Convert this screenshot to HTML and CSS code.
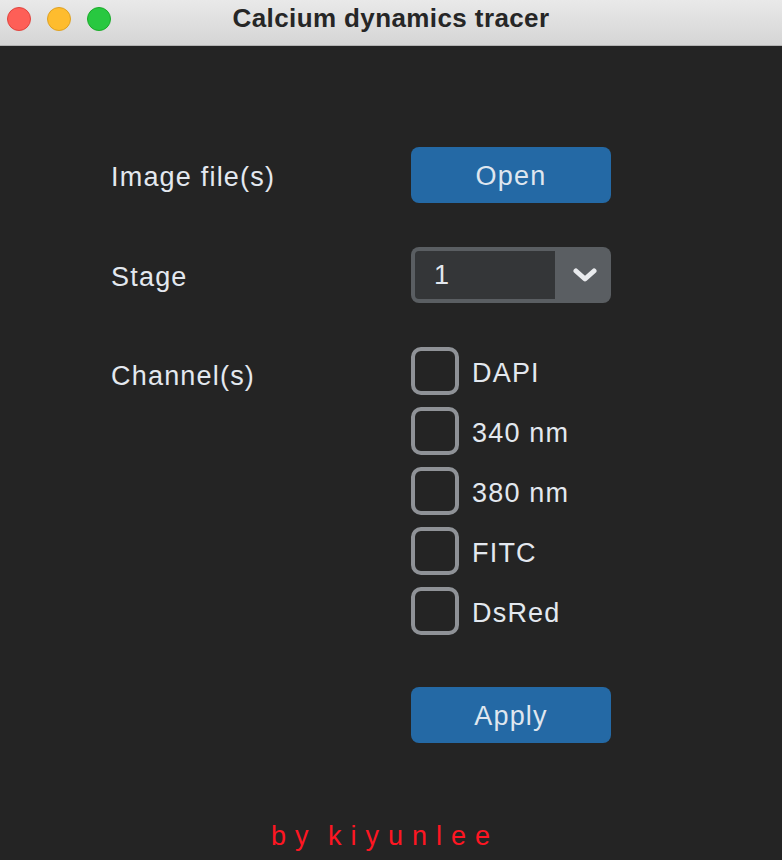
FILE: index.html
```html
<!DOCTYPE html>
<html lang="en">
<head>
<meta charset="utf-8">
<title>Calcium dynamics tracer</title>
<link rel="stylesheet" href="styles.css">
</head>
<body>
<header class="titlebar">
  <div class="lights">
    <span class="light red"></span>
    <span class="light yellow"></span>
    <span class="light green"></span>
  </div>
  <div class="title">Calcium dynamics tracer</div>
  <div class="spacer"></div>
</header>
<main class="form">
  <div class="label">Image file(s)</div>
  <button class="btn">Open</button>

  <div class="label">Stage</div>
  <div class="select">
    <div class="select-value">1</div>
    <div class="select-arrow">
      <svg width="24" height="14" viewBox="0 0 24 14"><polyline points="3,3 12,11 21,3" fill="none" stroke="#e9ebee" stroke-width="5" stroke-linecap="round" stroke-linejoin="round"/></svg>
    </div>
  </div>

  <div class="label label-top">Channel(s)</div>
  <div class="checks">
    <label class="check"><span class="box"></span><span class="check-text">DAPI</span></label>
    <label class="check"><span class="box"></span><span class="check-text">340 nm</span></label>
    <label class="check"><span class="box"></span><span class="check-text">380 nm</span></label>
    <label class="check"><span class="box"></span><span class="check-text">FITC</span></label>
    <label class="check"><span class="box"></span><span class="check-text">DsRed</span></label>
  </div>

  <div></div>
  <button class="btn apply">Apply</button>
</main>
<footer class="credit">by kiyunlee</footer>
</body>
</html>
```

FILE: styles.css
```css
html, body {
  margin: 0;
  padding: 0;
}
body {
  background: #242424;
  width: 782px;
  height: 860px;
  overflow: hidden;
  font-family: "Liberation Sans", Arial, sans-serif;
}
.titlebar {
  height: 45px;
  border-bottom: 1px solid #b3b3b3;
  background: linear-gradient(#e9e9e9, #d5d5d5);
  display: grid;
  grid-template-columns: 1fr auto 1fr;
  align-items: start;
}
.lights {
  display: flex;
  gap: 16px;
  padding: 7px 0 0 7px;
}
.light {
  width: 22px;
  height: 22px;
  border-radius: 50%;
  border: 1px solid rgba(0,0,0,0.15);
}
.red { background: #fe5f57; border-color: #e0443e; }
.yellow { background: #febc2e; border-color: #dea123; }
.green { background: #28c840; border-color: #1aab29; }
.title {
  font-weight: bold;
  font-size: 26px;
  line-height: 36px;
  color: #262626;
  letter-spacing: 0.4px;
}
.form {
  display: grid;
  grid-template-columns: 300px 200px;
  row-gap: 44px;
  padding: 101px 0 0 111px;
  align-items: center;
}
.label {
  font-size: 27px;
  line-height: 31px;
  color: #e3e8ef;
  letter-spacing: 1.2px;
  padding-top: 4px;
}
.label-top {
  align-self: start;
  padding-top: 14px;
}
.btn {
  width: 200px;
  height: 56px;
  border: none;
  border-radius: 8px;
  background: #2469a5;
  color: #dfe6ef;
  font-family: "Liberation Sans", Arial, sans-serif;
  font-size: 27px;
  letter-spacing: 1.2px;
  padding: 3px 0 0;
}
.apply {
  margin-top: 8px;
}
.select {
  width: 200px;
  height: 56px;
  box-sizing: border-box;
  border-radius: 8px;
  background: #5a5e62;
  padding: 4px 0 4px 4px;
  display: flex;
}
.select-value {
  width: 140px;
  background: #343638;
  border-radius: 4px 0 0 4px;
  font-size: 27px;
  line-height: 48px;
  color: #e3e8ef;
  padding-left: 19px;
  box-sizing: border-box;
}
.select-arrow {
  flex: 1;
  display: flex;
  align-items: center;
  justify-content: center;
  padding-left: 4px;
}
.checks {
  display: flex;
  flex-direction: column;
  gap: 12px;
}
.check {
  display: flex;
  align-items: center;
  gap: 13px;
  height: 48px;
}
.box {
  width: 48px;
  height: 48px;
  box-sizing: border-box;
  border: 4px solid #8f9297;
  border-radius: 10px;
}
.check-text {
  font-size: 27px;
  line-height: 31px;
  color: #e3e8ef;
  letter-spacing: 1.2px;
  padding-top: 5px;
}
.credit {
  margin-top: 78px;
  text-align: center;
  color: #fe1622;
  font-size: 27px;
  line-height: 31px;
  letter-spacing: 9px;
  word-spacing: -6px;
  padding-right: 12px;
}
```
